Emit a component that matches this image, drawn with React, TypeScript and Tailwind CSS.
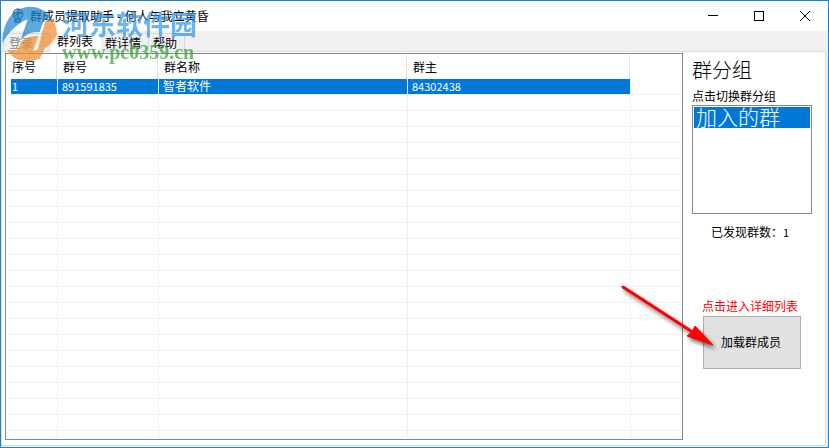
import React from "react";

const tabs = [
  { name: "登录", cls: "w-[47px] mt-[2px] h-[18px] border-x border-t border-[#d9d9d9] bg-[#f0f0f0] text-[#8a8a8a] pt-[2px] pl-[5px]" },
  { name: "群列表", cls: "w-[51px] h-[21px] bg-white text-black pl-[7px] -mb-px" },
  { name: "群详情", cls: "w-[48px] mt-[2px] h-[18px] border-r border-t border-[#d9d9d9] bg-[#f0f0f0] text-black pt-[2px] pl-[4px]" },
  { name: "帮助", cls: "w-[36px] mt-[2px] h-[18px] border-r border-t border-[#d9d9d9] bg-[#f0f0f0] text-black pt-[2px] pl-[4px]" },
];

const columns = ["序号", "群号", "群名称", "群主"];
const groups = [["1", "891591835", "智者软件", "84302438"]];
const emptyRows = Array.from({ length: 60 }, (_, i) => i);

function TitleBar() {
  return (
    <header className="flex h-[30px] shrink-0 items-center bg-white pl-[9px]">
      <svg className="h-4 w-4" viewBox="0 0 16 16" aria-hidden="true">
        <circle cx="8" cy="6" r="5" fill="#bcdcf2" stroke="#23405f" />
        <path d="M8 1v9M4 5h8M5 8l6-4" stroke="#23405f" fill="none" />
        <rect x="4" y="10" width="7" height="5" rx="2" fill="#3b6ea5" />
        <circle cx="8" cy="13" r="1" fill="#fff" />
      </svg>
      <h1 className="ml-1 flex-1 pt-[2px] text-xs whitespace-pre">群成员提取助手 - 何人与我立黄昏</h1>
      <button aria-label="最小化" className="flex h-full w-[46px] items-center justify-center">
        <svg width="10" height="10" viewBox="0 0 10 10" stroke="#000"><path d="M0 4.5h10" /></svg>
      </button>
      <button aria-label="最大化" className="flex h-full w-[46px] items-center justify-center">
        <svg width="10" height="10" viewBox="0 0 10 10" stroke="#000" fill="none"><rect x="0.5" y="0.5" width="9" height="9" /></svg>
      </button>
      <button aria-label="关闭" className="flex h-full w-[46px] items-center justify-center">
        <svg width="10" height="10" viewBox="0 0 10 10" stroke="#000"><path d="M0 0l10 10M10 0L0 10" /></svg>
      </button>
    </header>
  );
}

function GroupTable() {
  return (
    <div className="min-w-0 flex-1 overflow-hidden border border-[#828790] p-px">
      <div className="h-full overflow-hidden">
        <table className="w-full table-fixed border-separate border-spacing-0 text-left text-xs">
          <colgroup>
            <col className="w-[51px]" />
            <col className="w-[101px]" />
            <col className="w-[249px]" />
            <col className="w-[223px]" />
            <col />
          </colgroup>
          <thead>
            <tr>
              {columns.map((c) => (
                <th key={c} className="h-6 p-0 pr-px font-normal">
                  <div className="h-6 border-r border-[#e5e5e5] pl-[5px] leading-[26px]">{c}</div>
                </th>
              ))}
              <td className="p-0" />
            </tr>
          </thead>
          <tbody>
            {groups.map((row) => (
              <tr key={row[1]} className="text-white">
                {row.map((cell, i) => (
                  <td key={i} className={`h-4 border-r border-b border-[#f0f0f0] p-0 ${i === 0 ? "pl-1" : ""}`}>
                    <div className={`h-[15px] bg-[#0078d7] ${i === 0 ? "pl-px" : "pl-1"} ${i === 2 ? "text-xs leading-4" : "font-['Noto_Sans_CJK_SC',sans-serif] text-[11px] leading-[14px]"}`}>{cell}</div>
                  </td>
                ))}
                <td className="border-b border-[#f0f0f0] p-0" />
              </tr>
            ))}
            {emptyRows.map((r) => (
              <tr key={r}>
                {columns.map((c) => (
                  <td key={c} className="h-4 border-r border-b border-[#f0f0f0] p-0" />
                ))}
                <td className="border-b border-[#f0f0f0] p-0" />
              </tr>
            ))}
          </tbody>
        </table>
      </div>
    </div>
  );
}

function SidePanel() {
  return (
    <aside className="flex w-[142px] shrink-0 flex-col pl-[9px] text-xs">
      <h2 className="mt-1 text-xl leading-7 font-light">群分组</h2>
      <label htmlFor="group" className="mt-1 leading-4">点击切换群分组</label>
      <select
        id="group"
        size={4}
        defaultValue="joined"
        className="h-[109px] w-[120px] overflow-hidden border border-[#828790] bg-white p-px font-['Noto_Sans_CJK_SC',sans-serif] text-[21px] outline-none"
      >
        <option
          value="joined"
          className="flex h-[21px] min-h-0 items-center bg-[linear-gradient(#0078d7,#0078d7)] p-0 pb-1 pl-[2px] font-light text-white!"
        >
          加入的群
        </option>
      </select>
      <p className="mt-[10px] pl-[19px] leading-4">已发现群数：<span className="font-['Noto_Sans_CJK_SC',sans-serif] text-[11px]">1</span></p>
      <p className="mt-[58px] pl-[10px] leading-4 text-[#ff0000]">点击进入详细列表</p>
      <button className="mt-px ml-[11px] h-[53px] w-[98px] border border-[#adadad] bg-[#e1e1e1] pr-[2px]">加载群成员</button>
    </aside>
  );
}

function Watermark() {
  return (
    <div className="pointer-events-none absolute top-[3px] left-0 z-20 flex items-start opacity-70" aria-hidden="true">
      <svg className="h-[58px] w-[58px] shrink-0" viewBox="0 0 174 174">
        <path d="M4 118C4 50 40 8 88 8C115 8 140 22 152 45C140 40 130 46 126 56L116 84C92 84 76 88 58 110L80 46C48 58 20 88 4 118Z" fill="#1a86d0" />
        <path d="M132 52L154 46C163 58 168 75 168 92C158 112 146 124 132 132L116 164C80 178 40 174 18 138L50 138L60 116C74 100 90 96 112 96L96 140L110 138Z" fill="#ef8a2c" />
      </svg>
      <div className="mt-[6px] ml-[3px] flex flex-col whitespace-nowrap">
        <span className="text-[27px] leading-8 font-bold text-[#2f95e8]">河东软件园</span>
        <span className="font-['Liberation_Serif',serif] text-[20px] leading-5 font-bold text-[#2aa52a]">www.pc0359.cn</span>
      </div>
    </div>
  );
}

function PointerArrow() {
  return (
    <svg className="pointer-events-none absolute top-[228px] right-[103px] h-[80px] w-[110px] drop-shadow-[2px_3px_2px_rgba(0,0,0,0.6)]" viewBox="0 0 110 80" aria-hidden="true">
      <path d="M11 7L82 53" stroke="#f00" strokeWidth="3" strokeLinecap="round" />
      <path d="M101 65L83 46L80 52L75 56Z" fill="#f00" stroke="#f00" />
    </svg>
  );
}

export default function App() {
  return (
    <div className="relative flex h-screen flex-col border border-[#1883d7] bg-[#f0f0f0] font-['Liberation_Sans','Noto_Sans_CJK_SC',sans-serif] text-black">
      <TitleBar />
      <nav className="flex h-5 shrink-0 pl-[2px] text-xs">
        {tabs.map((t) => (
          <button key={t.name} className={`relative z-10 flex items-center text-left whitespace-nowrap ${t.cls}`}>
            {t.name}
          </button>
        ))}
      </nav>
      <main className="relative mr-[2px] mb-px flex min-h-0 flex-1 border border-[#dcdcdc] bg-white pt-px pb-[5px] pl-[3px]">
        <GroupTable />
        <SidePanel />
        <PointerArrow />
      </main>
      <Watermark />
    </div>
  );
}
